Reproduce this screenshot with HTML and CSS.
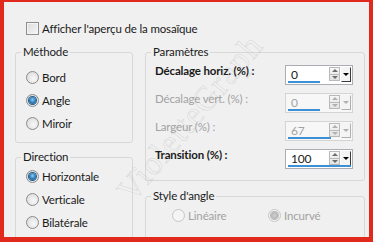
FILE: index.html
```html
<!DOCTYPE html>
<html lang="fr">
<head>
    <meta charset="UTF-8">
    <title>Mosaïque</title>
    <link rel="stylesheet" href="styles.css">
</head>
<body>
    <div class="dialog">
        <label class="preview-row"><span class="checkbox"></span>Afficher l'aperçu de la mosaïque</label>

        <div class="columns">
            <div class="column">
                <fieldset class="group group-method">
                    <legend>Méthode</legend>
                    <div class="group-body">
                        <label class="option"><span class="radio"></span>Bord</label>
                        <label class="option"><span class="radio checked"></span>Angle</label>
                        <label class="option"><span class="radio"></span>Miroir</label>
                    </div>
                </fieldset>

                <fieldset class="group group-direction">
                    <legend>Direction</legend>
                    <div class="group-body">
                        <label class="option"><span class="radio checked"></span>Horizontale</label>
                        <label class="option"><span class="radio"></span>Verticale</label>
                        <label class="option"><span class="radio"></span>Bilatérale</label>
                    </div>
                </fieldset>
            </div>

            <div class="column">
                <fieldset class="group group-params">
                    <legend>Paramètres</legend>
                    <div class="group-body">
                        <div class="param">
                            <span class="param-label">Décalage horiz. (%) :</span>
                            <div class="spin">
                                <div class="spin-top">
                                    <span class="spin-value">0</span>
                                    <span class="spin-arrows"><span class="arrow-up"></span><span class="arrow-down"></span></span>
                                    <span class="spin-drop"></span>
                                </div>
                                <span class="spin-bar" style="width: 32px"></span>
                            </div>
                        </div>

                        <div class="param disabled">
                            <span class="param-label">Décalage vert. (%) :</span>
                            <div class="spin">
                                <div class="spin-top">
                                    <span class="spin-value">0</span>
                                    <span class="spin-arrows"><span class="arrow-up"></span><span class="arrow-down"></span></span>
                                    <span class="spin-drop"></span>
                                </div>
                                <span class="spin-bar" style="width: 32px"></span>
                            </div>
                        </div>

                        <div class="param disabled">
                            <span class="param-label">Largeur (%) :</span>
                            <div class="spin">
                                <div class="spin-top">
                                    <span class="spin-value">67</span>
                                    <span class="spin-arrows"><span class="arrow-up"></span><span class="arrow-down"></span></span>
                                    <span class="spin-drop"></span>
                                </div>
                                <span class="spin-bar" style="width: 43px"></span>
                            </div>
                        </div>

                        <div class="param">
                            <span class="param-label">Transition (%) :</span>
                            <div class="spin">
                                <div class="spin-top">
                                    <span class="spin-value">100</span>
                                    <span class="spin-arrows"><span class="arrow-up"></span><span class="arrow-down"></span></span>
                                    <span class="spin-drop"></span>
                                </div>
                                <span class="spin-bar" style="width: 63px"></span>
                            </div>
                        </div>
                    </div>
                </fieldset>

                <fieldset class="group group-style">
                    <legend>Style d'angle</legend>
                    <div class="group-body option-row">
                        <label class="option disabled"><span class="radio"></span>Linéaire</label>
                        <label class="option disabled"><span class="radio checked"></span>Incurvé</label>
                    </div>
                </fieldset>
            </div>
        </div>

        <!-- watermark over the dialog -->
        <span class="watermark">VioletteGraph</span>
    </div>
</body>
</html>
```

FILE: styles.css
```css
:root {
    --frame-red: #e2291d;
    --dialog-bg: #f0f0f0;
    --group-border: #d8d8d8;
    --text: #1a1a1a;
    --text-disabled: #a2a2a2;
    --field-border: #abadb3;
    --bar-blue: #3d8fd6;
}

* {
    box-sizing: border-box;
}

body {
    margin: 0;
    font-family: "Lato", sans-serif;
    font-size: 11.5px;
    letter-spacing: -0.15px;
    color: var(--text);
    background: #ffffff;
}

.dialog {
    position: relative;
    width: 373px;
    height: 242px;
    overflow: hidden;
    background: var(--dialog-bg);
    border: solid var(--frame-red);
    border-width: 2px 4px 5px 4px;
    padding: 0 4px 0 11px;
}

/* top checkbox */
.preview-row {
    display: flex;
    align-items: center;
    gap: 3px;
    height: 16px;
    margin-top: 18px;
    padding-left: 11px;
}

.checkbox {
    width: 13px;
    height: 13px;
    border: 1px solid #8e8f8f;
    background: linear-gradient(135deg, #dcdcdc, #f6f6f6);
    box-shadow: inset 0 0 0 1px #f4f4f4;
}

.columns {
    display: grid;
    grid-template-columns: 118px 220px;
    column-gap: 12px;
    margin-top: 8px;
}

.column {
    display: flex;
    flex-direction: column;
}

/* group boxes */
.group {
    margin: 0;
    padding: 0;
    border: 1px solid var(--group-border);
    border-radius: 3px;
    min-width: 0;
}

.group legend {
    line-height: 16px;
    padding: 0 2px;
    margin-left: 5px;
}

.group-method .group-body {
    padding: 6px 0 7px 10px;
}

.group-direction {
    margin-top: 6px;
}

.group-direction .group-body {
    padding: 0 0 20px 10px;
}

.group-params .group-body {
    padding: 5px 11px 11px 9px;
    display: flex;
    flex-direction: column;
    gap: 8px;
}

.group-style {
    margin-top: 7px;
}

.group-style .group-body {
    padding: 0 0 20px 26px;
}

/* radios */
.option {
    display: flex;
    align-items: center;
    gap: 3px;
    height: 23px;
}

.option-row {
    display: flex;
}

.option-row .option {
    width: 100px;
}

.radio {
    position: relative;
    width: 13px;
    height: 13px;
    border-radius: 50%;
    border: 1px solid #8b8b8b;
    background: radial-gradient(circle at 60% 60%, #f8f8f8, #d6d6d6);
}

.radio.checked::after {
    content: "";
    position: absolute;
    left: 2px;
    top: 2px;
    width: 7px;
    height: 7px;
    border-radius: 50%;
    background: radial-gradient(circle at 50% 40%, #8fd0f5 0%, #2a78b4 55%, #1c4f7a 100%);
    box-shadow: 0 0 0 1px #1f5a8a;
}

.option.disabled {
    color: var(--text-disabled);
}

.option.disabled .radio {
    border-color: #c6c6c6;
    background: #f4f4f4;
}

.option.disabled .radio.checked::after {
    background: radial-gradient(circle, #d0d0d0, #a8a8a8);
    box-shadow: 0 0 0 1px #b8b8b8;
}

/* numeric parameters */
.param {
    display: flex;
    align-items: flex-start;
    justify-content: space-between;
    height: 20px;
}

.param-label {
    font-weight: 700;
    line-height: 16px;
    margin-top: -2px;
}

.param.disabled .param-label {
    font-weight: 400;
    color: var(--text-disabled);
}

.spin {
    display: flex;
    flex-direction: column;
    width: 68px;
    height: 20px;
    border: 1px solid var(--field-border);
    background: #ffffff;
    padding: 0 1px 1px 2px;
}

.spin-top {
    display: flex;
    align-items: flex-start;
    height: 15px;
}

.spin-value {
    flex: 1;
    padding-left: 3px;
    font-size: 12px;
    line-height: 16px;
    margin-top: 1px;
}

.spin-arrows {
    display: flex;
    flex-direction: column;
    width: 11px;
    height: 14px;
    margin-top: 1px;
    margin-right: 1px;
    border: 1px solid #b9b9b9;
    background: linear-gradient(#f7f7f7, #e3e3e3);
}

.arrow-up,
.arrow-down {
    flex: 1;
    display: flex;
    justify-content: center;
    align-items: center;
}

.arrow-up {
    border-bottom: 1px solid #b9b9b9;
}

.arrow-up::before,
.arrow-down::before {
    content: "";
    border-left: 3px solid transparent;
    border-right: 3px solid transparent;
}

.arrow-up::before {
    border-bottom: 3px solid #6d6d6d;
}

.arrow-down::before {
    border-top: 3px solid #6d6d6d;
}

.spin-drop {
    display: flex;
    justify-content: center;
    align-items: center;
    width: 10px;
    height: 15px;
    margin-top: 1px;
    background: #f4f4f4;
    border: 1px solid #f4f4f4;
    border-right-color: #3a3a3a;
    border-bottom-color: #3a3a3a;
}

.spin-drop::before {
    content: "";
    border-left: 3px solid transparent;
    border-right: 3px solid transparent;
    border-top: 3px solid #000000;
}

.spin-bar {
    height: 2px;
    background: var(--bar-blue);
}

.param.disabled .spin {
    background: #f7f7f7;
    border-color: #d4d4d4;
    color: var(--text-disabled);
}

.param.disabled .arrow-up::before {
    border-bottom-color: #b0b0b0;
}

.param.disabled .arrow-down::before {
    border-top-color: #b0b0b0;
}

.param.disabled .spin-drop {
    border-right-color: #b0b0b0;
    border-bottom-color: #b0b0b0;
}

.param.disabled .spin-drop::before {
    border-top-color: #b0b0b0;
}

.watermark {
    position: absolute;
    left: 186px;
    top: 116px;
    font-family: "Liberation Serif", serif;
    font-size: 34px;
    letter-spacing: 1px;
    white-space: nowrap;
    color: transparent;
    -webkit-text-stroke: 0.6px rgba(150, 150, 150, 0.28);
    transform: translate(-50%, -50%) rotate(-50deg);
    pointer-events: none;
}
```
